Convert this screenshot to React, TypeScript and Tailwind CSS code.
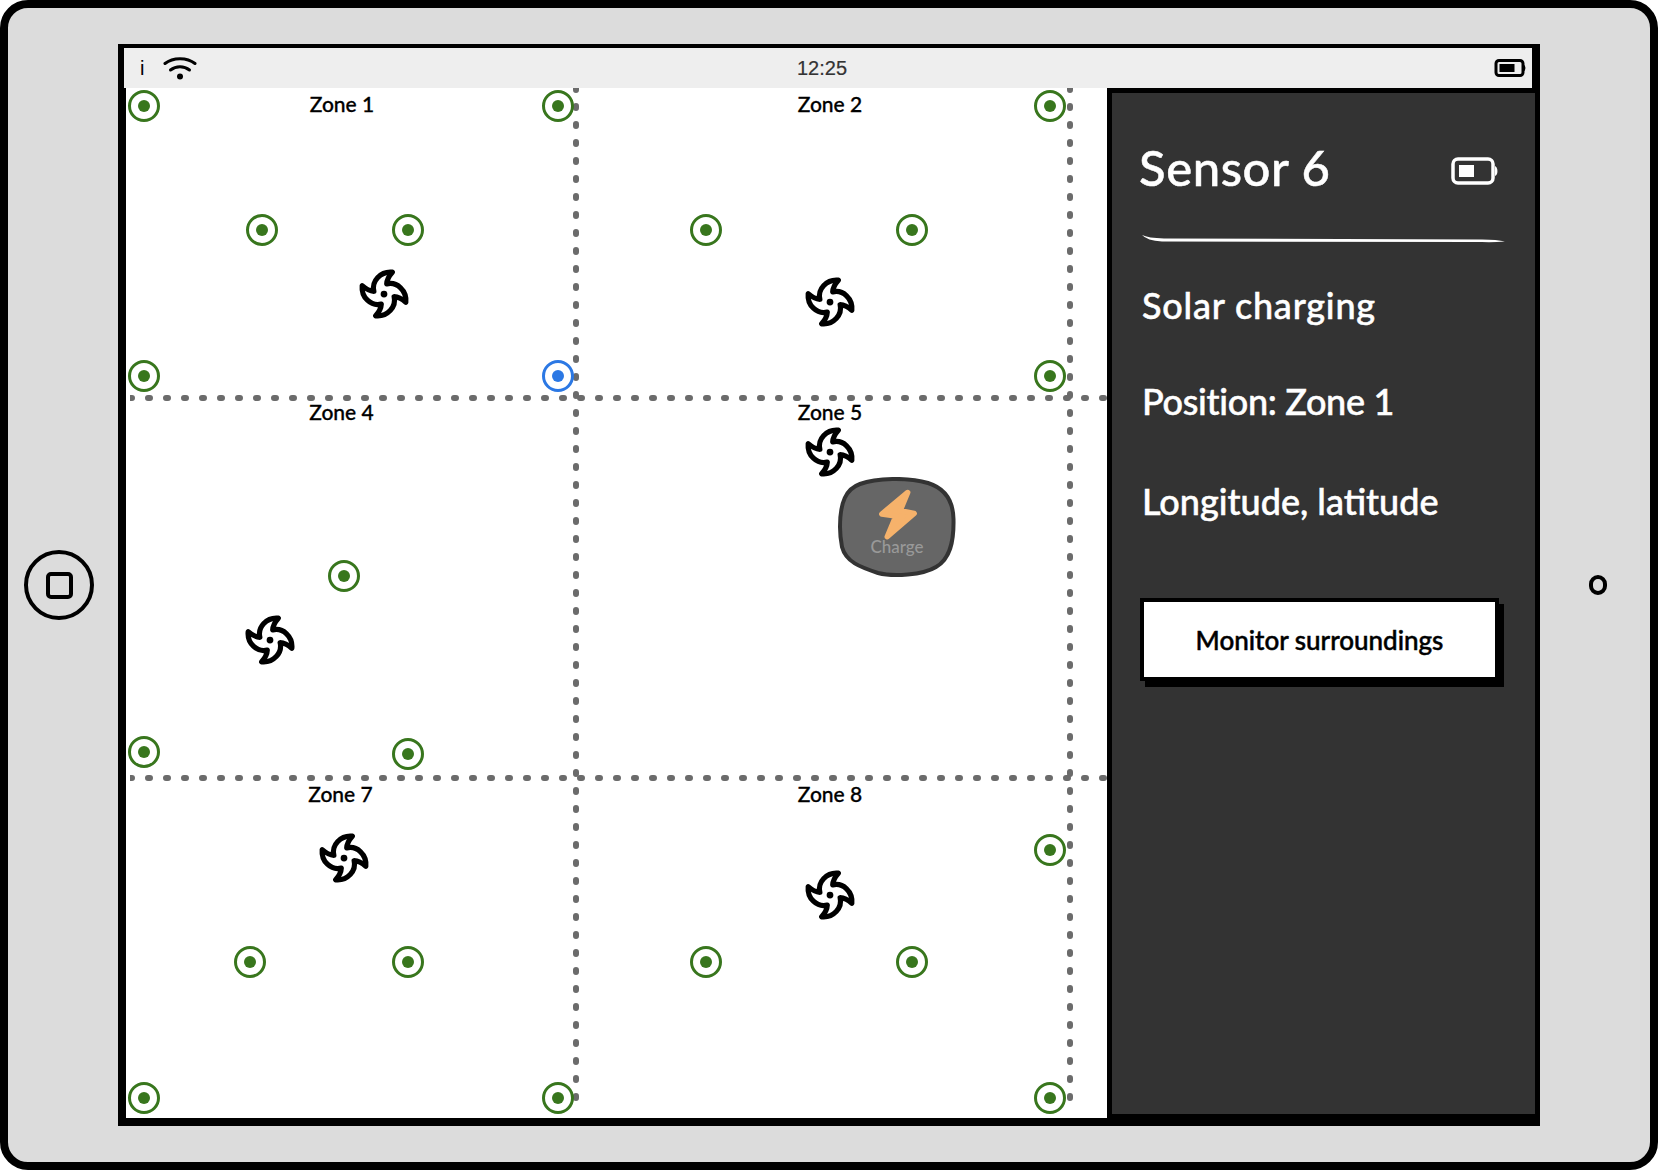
type Pin = { x: number; y: number; active?: boolean };
type ZoneData = {
  name: string;
  labelClass: string;
  fan: { x: number; y: number };
  pins: Pin[];
  charge?: boolean;
};

const zones: (ZoneData | null)[] = [
  {
    name: "Zone 1",
    labelClass: "pr-[18px] pt-[4px]",
    fan: { x: 258, y: 206 },
    pins: [
      { x: 18, y: 18 },
      { x: 432, y: 18 },
      { x: 136, y: 142 },
      { x: 282, y: 142 },
      { x: 18, y: 288 },
      { x: 432, y: 288, active: true },
    ],
  },
  {
    name: "Zone 2",
    labelClass: "pl-[14px] pt-[4px]",
    fan: { x: 254, y: 214 },
    pins: [
      { x: 474, y: 18 },
      { x: 130, y: 142 },
      { x: 336, y: 142 },
      { x: 474, y: 288 },
    ],
  },
  null,
  {
    name: "Zone 4",
    labelClass: "pr-[19px] pt-[2px]",
    fan: { x: 144, y: 242 },
    pins: [
      { x: 218, y: 178 },
      { x: 18, y: 354 },
      { x: 282, y: 356 },
    ],
  },
  {
    name: "Zone 5",
    labelClass: "pl-[14px] pt-[2px]",
    fan: { x: 254, y: 54 },
    pins: [],
    charge: true,
  },
  null,
  {
    name: "Zone 7",
    labelClass: "pr-[21px] pt-[5px]",
    fan: { x: 218, y: 81 },
    pins: [
      { x: 124, y: 185 },
      { x: 282, y: 185 },
      { x: 18, y: 321 },
      { x: 432, y: 321 },
    ],
  },
  {
    name: "Zone 8",
    labelClass: "pl-[14px] pt-[5px]",
    fan: { x: 254, y: 118 },
    pins: [
      { x: 130, y: 185 },
      { x: 336, y: 185 },
      { x: 474, y: 73 },
      { x: 474, y: 321 },
    ],
  },
  null,
];

const SensorPin = ({ x, y, active }: Pin) => (
  <div
    className={`absolute z-10 flex h-8 w-8 -translate-x-1/2 -translate-y-1/2 items-center justify-center rounded-full border-[3.5px] ${
      active ? "border-[#2b78e4]" : "border-[#38761d]"
    }`}
    style={{ left: x, top: y }}
  >
    <div className={`h-3 w-3 rounded-full ${active ? "bg-[#2b78e4]" : "bg-[#38761d]"}`} />
  </div>
);

const FanIcon = ({ x, y }: { x: number; y: number }) => (
  <svg
    width="54"
    height="54"
    viewBox="-12 -12 24 24"
    className="absolute z-10 -translate-x-1/2 -translate-y-1/2"
    style={{ left: x, top: y }}
    fill="none"
    stroke="black"
    strokeWidth="2.300"
    strokeLinejoin="round"
    strokeLinecap="round"
  >
    <path d="M3.700 -9.700C-1.500 -10.200 -5.600 -5.800 -4.500 -1.200Q-7 -1.300 -9.700 -3.700C-10.200 1.500 -5.800 5.600 -1.200 4.500Q-1.300 7 -3.700 9.700C1.500 10.200 5.600 5.800 4.500 1.200Q7 1.300 9.700 3.700C10.200 -1.500 5.800 -5.600 1.200 -4.500Q1.300 -7 3.700 -9.700Z" />
    <circle cx="0" cy="0" r="1.500" fill="black" stroke="none" />
  </svg>
);

const ChargeButton = () => (
  <div className="absolute left-[262px] top-[79px] z-10 h-[101px] w-[118px]">
    <svg viewBox="0 0 118 101" className="absolute inset-0 h-full w-full">
      <path
        d="M2 50C2 25 8 12 22 7C38 1 70 0 90 6C106 11 115 22 115.500 42C116 65 112 82 98 90C85 98 55 100 40 96C22 90 8 85 4 70C2.500 62 2 58 2 50Z"
        fill="#666666"
        stroke="#333333"
        strokeWidth="4"
      />
    </svg>
    <div className="relative flex flex-col items-center pt-[10px]">
      <svg width="44" height="54" viewBox="0 0 40 50" className="ml-[2px]">
        <polygon
          points="29,5 5,25 18,27 10,46 35,24.500 22,22"
          fill="#f6b26b"
          stroke="#f6b26b"
          strokeWidth="5"
          strokeLinejoin="round"
        />
      </svg>
      <span className="-mt-[4px] text-[17px] font-medium leading-5 text-[#999999]">Charge</span>
    </div>
  </div>
);

const Zone = ({ zone }: { zone: ZoneData | null }) => {
  if (!zone) return <div />;
  return (
    <div className="relative">
      <div className={`text-center text-[21px] font-medium leading-6 text-black [-webkit-text-stroke:0.3px] ${zone.labelClass}`}>
        {zone.name}
      </div>
      <FanIcon x={zone.fan.x} y={zone.fan.y} />
      {zone.pins.map((p) => (
        <SensorPin key={`${p.x}-${p.y}`} {...p} />
      ))}
      {zone.charge && <ChargeButton />}
    </div>
  );
};

const ZoneMap = () => (
  <div className="relative grid h-[1030px] w-[981px] grid-cols-[450px_494px_37px] grid-rows-[310px_379px_341px] bg-white">
    <svg className="absolute inset-0 h-full w-full" stroke="#6b6b6b" strokeWidth="6" strokeLinecap="round" strokeDasharray="2 16">
      <line x1="450" y1="0" x2="450" y2="1012" />
      <line x1="944" y1="0" x2="944" y2="1012" />
      <line x1="4" y1="310" x2="981" y2="310" />
      <line x1="4" y1="690" x2="981" y2="690" />
      <rect x="0" y="0" width="4" height="1030" fill="white" stroke="none" />
    </svg>
    {zones.map((z, i) => (
      <Zone key={i} zone={z} />
    ))}
  </div>
);

const SidePanel = () => (
  <div className="h-[1030px] w-[428px] rounded-tl-[3px] border-b-4 border-l-[5px] border-t-[5px] border-black bg-[#333333] pl-[27px] pr-[31px] text-white [-webkit-text-stroke:0.5px]">
    <div className="flex items-center justify-between pr-[5px] pt-[44px]">
      <h1 className="text-[49px] font-medium leading-[60px] tracking-[0.6px]">Sensor 6</h1>
      <svg width="48" height="28" viewBox="0 0 48 28" className="mt-[8px]">
        <rect x="2" y="2" width="40" height="24" rx="5" fill="none" stroke="white" strokeWidth="3.5" />
        <rect x="8" y="8" width="15" height="12" fill="white" />
        <path d="M44 9c3 1 3.500 9 0 10z" fill="white" />
      </svg>
    </div>
    <svg width="364" height="8" viewBox="0 0 364 8" className="ml-[3px] mt-[38px] block">
      <path d="M0 0Q6 3 22 3.500L340 4.500Q355 4.500 363 6.500Q350 7.500 340 7L20 6.500Q5 5.500 0 0Z" fill="white" />
    </svg>
    <div className="pl-[3px] pt-[38px] text-[36px] font-medium leading-[48px]">
      <p className="tracking-[0.8px]">Solar charging</p>
      <p className="mt-[48px] tracking-[-0.3px]">Position: Zone 1</p>
      <p className="mt-[52px]">Longitude, latitude</p>
    </div>
    <button className="ml-[1px] mt-[73px] flex h-[83px] w-[359px] items-center justify-center border-4 border-black bg-white pt-[2px] text-[26px] font-medium text-black shadow-[5px_6px_0_#000]">
      Monitor surroundings
    </button>
  </div>
);

const StatusBar = () => (
  <div className="mr-[3px] flex h-10 items-center bg-[#eeeeee] font-['Liberation_Sans',sans-serif] text-black">
    <div className="flex w-[658px] items-center pl-[16px]">
      <span className="text-[20px] leading-none">i</span>
      <svg width="34" height="24" viewBox="0 0 34 24" className="ml-[19px]" fill="none" stroke="black" strokeWidth="3" strokeLinecap="round">
        <path d="M2 7.500C10 1 24 1 32 7.500" />
        <path d="M7.500 14C13 9.500 21 9.500 26.500 14" />
        <circle cx="17" cy="20.500" r="3" fill="black" stroke="none" />
      </svg>
    </div>
    <span className="w-[80px] text-center text-[20px] text-[#333333] [-webkit-text-stroke:0.2px]">12:25</span>
    <svg width="33" height="18" viewBox="0 0 32 18" className="ml-auto mr-[5px]">
      <rect x="1.500" y="1.500" width="27" height="15" rx="3" fill="none" stroke="black" strokeWidth="3" />
      <rect x="5" y="5" width="15" height="8" fill="black" />
      <path d="M29 5.500c2.500 1 2.500 6 0 7z" fill="black" />
    </svg>
  </div>
);

export default function App() {
  return (
    <div className="flex h-[1170px] w-[1658px] items-start overflow-hidden rounded-[28px] border-8 border-black bg-[#dcdcdc] font-['Lato',sans-serif]">
      <div className="flex h-full w-[110px] items-center pl-[16px]">
        <div className="flex h-[70px] w-[70px] items-center justify-center rounded-full border-4 border-black">
          <div className="h-[27px] w-[27px] rounded-[5px] border-4 border-black" />
        </div>
      </div>
      <div className="mt-[36px] h-[1082px] w-[1422px] border-b-8 border-l-[6px] border-r-[5px] border-t-4 border-black bg-black">
        <StatusBar />
        <div className="flex pl-[2px]">
          <ZoneMap />
          <SidePanel />
        </div>
      </div>
      <div className="flex h-full flex-1 items-center pl-[49px]">
        <div className="h-[20px] w-[18px] rounded-full border-[4.5px] border-black" />
      </div>
    </div>
  );
}
